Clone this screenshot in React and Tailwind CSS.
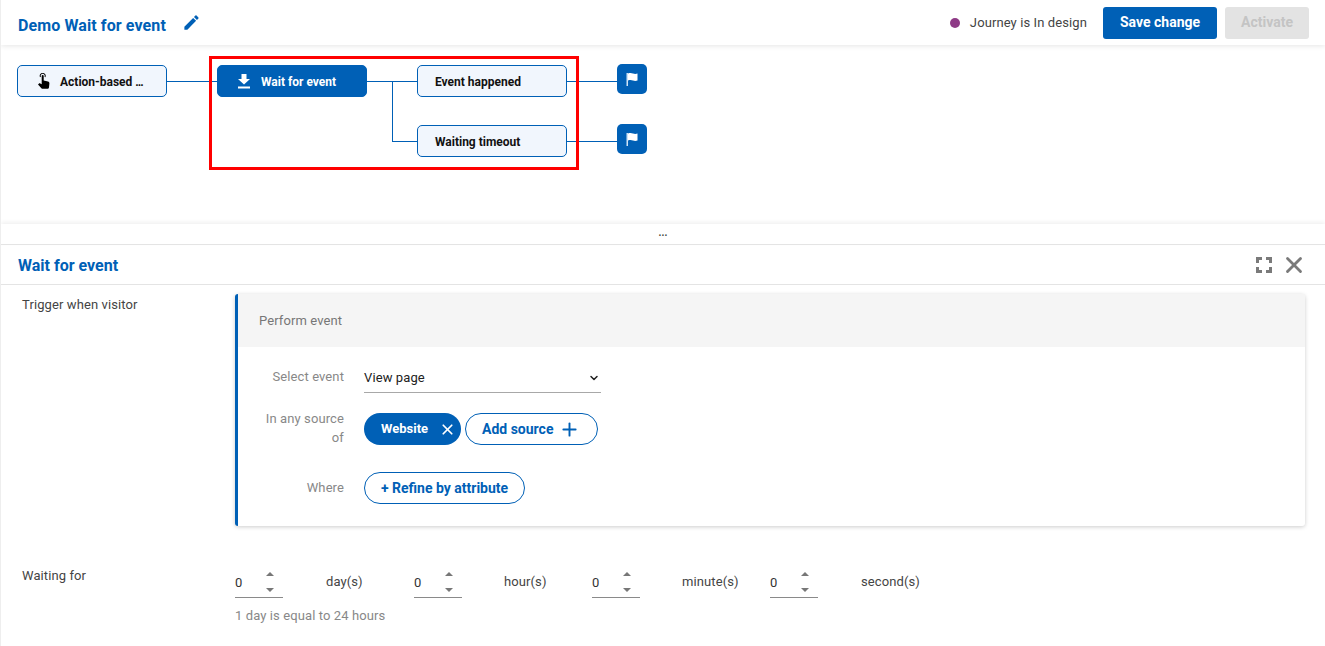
import { ChevronDown, Plus, X } from 'lucide-react';

const blue = '#0060b6';

function PencilIcon() {
  return (
    <svg width="19" height="19" viewBox="0 0 24 24" fill="#0060b6">
      <path d="M3 17.25V21h3.75L17.81 9.94l-3.75-3.75L3 17.25zM20.71 7.04a1 1 0 0 0 0-1.41l-2.34-2.34a1 1 0 0 0-1.41 0l-1.83 1.83 3.75 3.75 1.83-1.83z" />
    </svg>
  );
}

function TouchIcon() {
  return (
    <svg width="12" height="16" viewBox="0 0 12 16" fill="#000">
      <path d="M2 4.200a3 3 0 1 1 5.400 0l-.9-.5a2 2 0 1 0-3.600 0z" />
      <path d="M3.700 3a1 1 0 0 1 2 0v4.500l4.300 1.100c.9.300 1.500.9 1.400 1.800l-.4 3.800c-.1.900-.8 1.600-1.700 1.600H4.700c-.5 0-1-.2-1.300-.6L0 11.500l.8-.8c.4-.4.9-.5 1.400-.3l1.500.8z" />
    </svg>
  );
}

function DownloadIcon() {
  return (
    <svg width="12" height="15" viewBox="0 0 12 15" fill="#fff">
      <path d="M3.500 0h5v5H12L6 10.500 0 5h3.500z" />
      <rect x="0" y="12.500" width="12" height="2" />
    </svg>
  );
}

function FlagIcon() {
  return (
    <svg width="12" height="14" viewBox="0 0 12 14" fill="#fff">
      <rect x="0.500" y="1" width="1.500" height="13" fill="#cfe3f5" />
      <path d="M2 1.500c2-.8 3.500-.5 5 0s3 .5 4.500 0v7c-1.500.5-3 .5-4.500 0s-3-.8-5 0z" />
    </svg>
  );
}

function ExpandIcon() {
  return (
    <svg width="16" height="16" viewBox="0 0 16 16" fill="none" stroke="#7a7a7a" strokeWidth="3">
      <path d="M1.500 6V1.500H6M10 1.500h4.500V6M14.500 10v4.500H10M6 14.500H1.500V10" />
    </svg>
  );
}

// nodes of the journey diagram sit on a free canvas
function Node({ className, children, icon, filled, textClass }) {
  return (
    <div
      className={`absolute w-[150px] h-[32px] rounded-[5px] border border-[#0060b6] flex items-center text-[12px] font-bold ${
        filled ? 'bg-[#0060b6] text-white' : 'bg-[#f1f6fd] text-[#111]'
      } ${className} ${textClass}`}
    >
      {icon}
      <span className="pt-[2px]">{children}</span>
    </div>
  );
}

function FlagNode({ className }) {
  return (
    <div className={`absolute w-[30px] h-[30px] rounded-[5px] bg-[#0060b6] flex items-center justify-center ${className}`}>
      <FlagIcon />
    </div>
  );
}

function Connectors() {
  return (
    <svg className="absolute left-0 top-0" width="700" height="179" fill="none" stroke={blue} strokeWidth="1" shapeRendering="crispEdges">
      <path d="M166 36.500H216M366 36.500H416M391.500 36.500V96.500H416M566 36.500H616M566 96.500H616" />
    </svg>
  );
}

function Stepper({ unit, gap }) {
  return (
    <div className="flex items-start">
      <div className="w-[48px] h-[31px] border-b border-[#8a8a8a] relative text-[13px] text-[#333] pt-[6px] leading-[20px]">
        0
        <span className="absolute left-[31px] top-[5px] w-0 h-0 border-x-[4px] border-x-transparent border-b-[4px] border-b-[#777]"></span>
        <span className="absolute left-[31px] top-[21px] w-0 h-0 border-x-[4px] border-x-transparent border-t-[4px] border-t-[#777]"></span>
      </div>
      <span className={`text-[13px] text-[#444] leading-[20px] pt-[5px] ${gap}`}>{unit}</span>
    </div>
  );
}

export default function App() {
  return (
    <div className="w-[1325px] h-[646px] overflow-hidden bg-white text-[13px] tracking-[0.1px] text-[#444] flex flex-col border-l border-[#eeeeee]" style={{ fontFamily: 'Roboto, sans-serif' }}>
      {/* Header */}
      <div className="h-[45px] shrink-0 flex items-center justify-between pl-[17px] pr-[16px] shadow-[0_1px_5px_rgba(0,0,0,0.1)] relative z-10 bg-white">
        <div className="flex items-center">
          <h1 className="text-[16px] font-bold text-[#0060b6] pt-[7px]">Demo Wait for event</h1>
          <span className="ml-[16px] flex"><PencilIcon /></span>
        </div>
        <div className="flex items-center">
          <span className="w-[10px] h-[10px] rounded-full bg-[#8e3a86]"></span>
          <span className="ml-[10px] text-[13px] text-[#444]">Journey is In design</span>
          <button className="ml-[16px] w-[114px] h-[32px] rounded-[3px] bg-[#0060b6] text-white text-[14px] font-bold tracking-normal">Save change</button>
          <button className="ml-[8px] w-[84px] h-[32px] rounded-[3px] bg-[#e3e3e3] text-[#c4c4c4] text-[14px] font-bold tracking-normal">Activate</button>
        </div>
      </div>

      {/* Diagram canvas */}
      <div className="h-[179px] shrink-0 relative tracking-normal">
        <Connectors />
        <Node className="left-[16px] top-[20px]" textClass="pl-[20px]" icon={<span className="mr-[10px] flex"><TouchIcon /></span>}>
          Action-based <span className="tracking-[-1px]">...</span>
        </Node>
        <Node filled className="left-[216px] top-[20px]" textClass="pl-[20px]" icon={<span className="mr-[11px] flex"><DownloadIcon /></span>}>
          Wait for event
        </Node>
        <Node className="left-[416px] top-[20px]" textClass="pl-[17px]">Event happened</Node>
        <Node className="left-[416px] top-[80px]" textClass="pl-[17px]">Waiting timeout</Node>
        <FlagNode className="left-[616px] top-[19px]" />
        <FlagNode className="left-[616px] top-[79px]" />
        <div className="absolute left-[208px] top-[11px] w-[370px] h-[114px] border-[3px] border-[#ff0000]"></div>
      </div>

      {/* Resize handle */}
      <div className="h-[21px] shrink-0 bg-white border-b border-[#e4e4e4] shadow-[0_-2px_4px_rgba(0,0,0,0.06)] flex items-center justify-center">
        <span className="text-[10px] font-bold leading-none text-[#444] -mt-[2px]">...</span>
      </div>

      {/* Panel title */}
      <div className="h-[40px] shrink-0 border-b border-[#e4e4e4] flex items-center justify-between pl-[17px] pr-[18px]">
        <h2 className="text-[16px] font-bold tracking-normal text-[#0060b6] pt-[2px]">Wait for event</h2>
        <div className="flex items-center gap-[9px]">
          <ExpandIcon />
          <X size={26} color="#7a7a7a" strokeWidth={2.600} />
        </div>
      </div>

      {/* Panel body */}
      <div className="flex-1 pl-[21px] pr-[20px] pt-[9px]">
        <div className="flex">
          <div className="w-[213px] shrink-0 pt-[1px] leading-[20px] text-[13px] text-[#444]">Trigger when visitor</div>
          <div className="flex-1 h-[232px] rounded-[3px] border-l-[3px] border-[#0060b6] shadow-[0_1px_4px_rgba(0,0,0,0.2)] bg-white">
            <div className="h-[53px] bg-[#f5f5f5] flex items-center pl-[21px] text-[13px] text-[#777]">Perform event</div>
            <div className="pt-[17px]">
              <div className="flex items-start">
                <div className="w-[106px] text-right leading-[26px] text-[#888]">Select event</div>
                <div className="ml-[20px] w-[237px] h-[29px] border-b border-[#a8a8a8] flex items-center justify-between text-[13px] text-[#222]">
                  <span>View page</span>
                  <ChevronDown size={12} color="#222" strokeWidth={3} className="mr-[1px]" />
                </div>
              </div>
              <div className="flex items-start mt-[20px]">
                <div className="ml-[21px] w-[85px] -mt-[4px] text-right leading-[19px] text-[#888]">In any source of</div>
                <div className="ml-[20px] flex items-center">
                  <div className="w-[97px] h-[32px] rounded-full bg-[#0060b6] text-white text-[13px] font-bold tracking-normal flex items-center justify-between pl-[17px] pr-[5px]">
                    <span>Website</span>
                    <X size={17} color="#fff" strokeWidth={2.400} />
                  </div>
                  <div className="ml-[4px] w-[133px] h-[32px] rounded-full border border-[#0060b6] text-[#0060b6] text-[14px] font-bold tracking-normal flex items-center pl-[16px]">
                    <span>Add source</span>
                    <Plus size={21} color="#0060b6" strokeWidth={2.200} className="ml-[6px]" />
                  </div>
                </div>
              </div>
              <div className="flex items-center mt-[25px]">
                <div className="w-[106px] text-right text-[#888]">Where</div>
                <div className="ml-[20px] w-[161px] h-[32px] rounded-full border border-[#0060b6] text-[#0060b6] text-[14px] font-bold tracking-normal flex items-center justify-center">+ Refine by attribute</div>
              </div>
            </div>
          </div>
        </div>

        <div className="flex mt-[40px]">
          <div className="w-[213px] shrink-0 leading-[20px] text-[13px] text-[#444]">Waiting for</div>
          <div>
            <div className="flex pt-[1px]">
              <Stepper unit="day(s)" gap="ml-[43px] w-[88px]" />
              <Stepper unit="hour(s)" gap="ml-[42px] w-[88px]" />
              <Stepper unit="minute(s)" gap="ml-[42px] w-[88px]" />
              <Stepper unit="second(s)" gap="ml-[43px]" />
            </div>
            <div className="mt-[8px] text-[13px] text-[#888] leading-[20px]">1 day is equal to 24 hours</div>
          </div>
        </div>
      </div>
    </div>
  );
}
